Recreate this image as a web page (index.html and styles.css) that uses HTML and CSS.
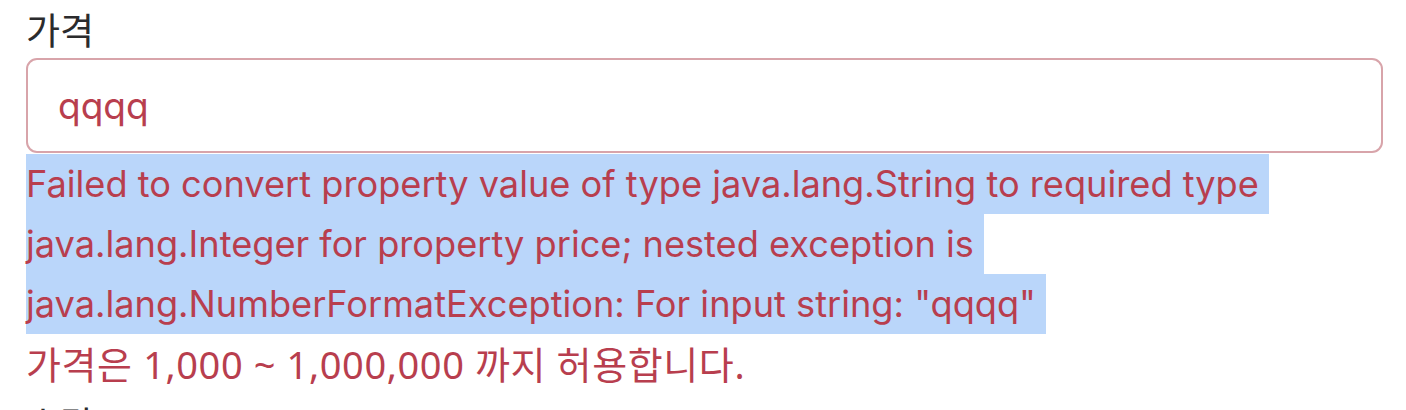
FILE: index.html
```html
<!DOCTYPE html>
<html lang="ko">
<head>
    <meta charset="UTF-8">
    <meta name="viewport" content="width=device-width, initial-scale=1.0">
    <title>상품 등록</title>
    <link rel="stylesheet" href="styles.css">
</head>
<body>
    <div class="container">
        <div class="form-group">
            <label for="price" class="form-label">가격</label>
            <input type="text" id="price" name="price" class="form-control field-error" value="qqqq">
            <div class="field-error-msg">
                <!-- selected part of the message -->
                <div class="sel-line">Failed to convert property value of type java.lang.String to required type</div>
                <div class="sel-line">java.lang.Integer for property price; nested exception is</div>
                <div class="sel-line">java.lang.NumberFormatException: For input string: "qqqq"</div>
                <div class="msg-ko">가격은 1,000 ~ 1,000,000 까지 허용합니다.</div>
            </div>
        </div>
        <div class="form-group">
            <label for="quantity" class="form-label">수량</label>
        </div>
    </div>
</body>
</html>
```

FILE: styles.css
```css
body {
    margin: 0;
    background-color: #ffffff;
    font-family: Inter, "Noto Sans CJK KR", sans-serif;
    color: #2b2b2d;
}

.container {
    padding-left: 26px;
    padding-right: 23px;
}

.form-label {
    display: block;
    height: 54px;
    margin-bottom: 4px;
    font-family: "Noto Sans CJK KR", sans-serif;
    font-size: 37px;
    line-height: 58px;
    color: #2b2b2d;
}

.form-control {
    display: block;
    box-sizing: border-box;
    width: 100%;
    height: 95px;
    padding: 0 30px;
    margin: 0;
    border: 2px solid #d8a4aa;
    border-radius: 11px;
    background: #ffffff;
    font-family: Inter, sans-serif;
    font-size: 37px;
    outline: none;
}

/* invalid field */
.field-error {
    color: #b83e4e;
}

.field-error-msg {
    margin-top: 1px;
    font-size: 36.2px;
    line-height: 60px;
    color: #b83e4e;
}

.sel-line {
    width: fit-content;
    padding-right: 10px;
    background-color: #bad6fa;
}

.msg-ko {
    font-family: "Noto Sans", "Noto Sans CJK KR", sans-serif;
    font-size: 38px;
    letter-spacing: 0.6px;
}
```
